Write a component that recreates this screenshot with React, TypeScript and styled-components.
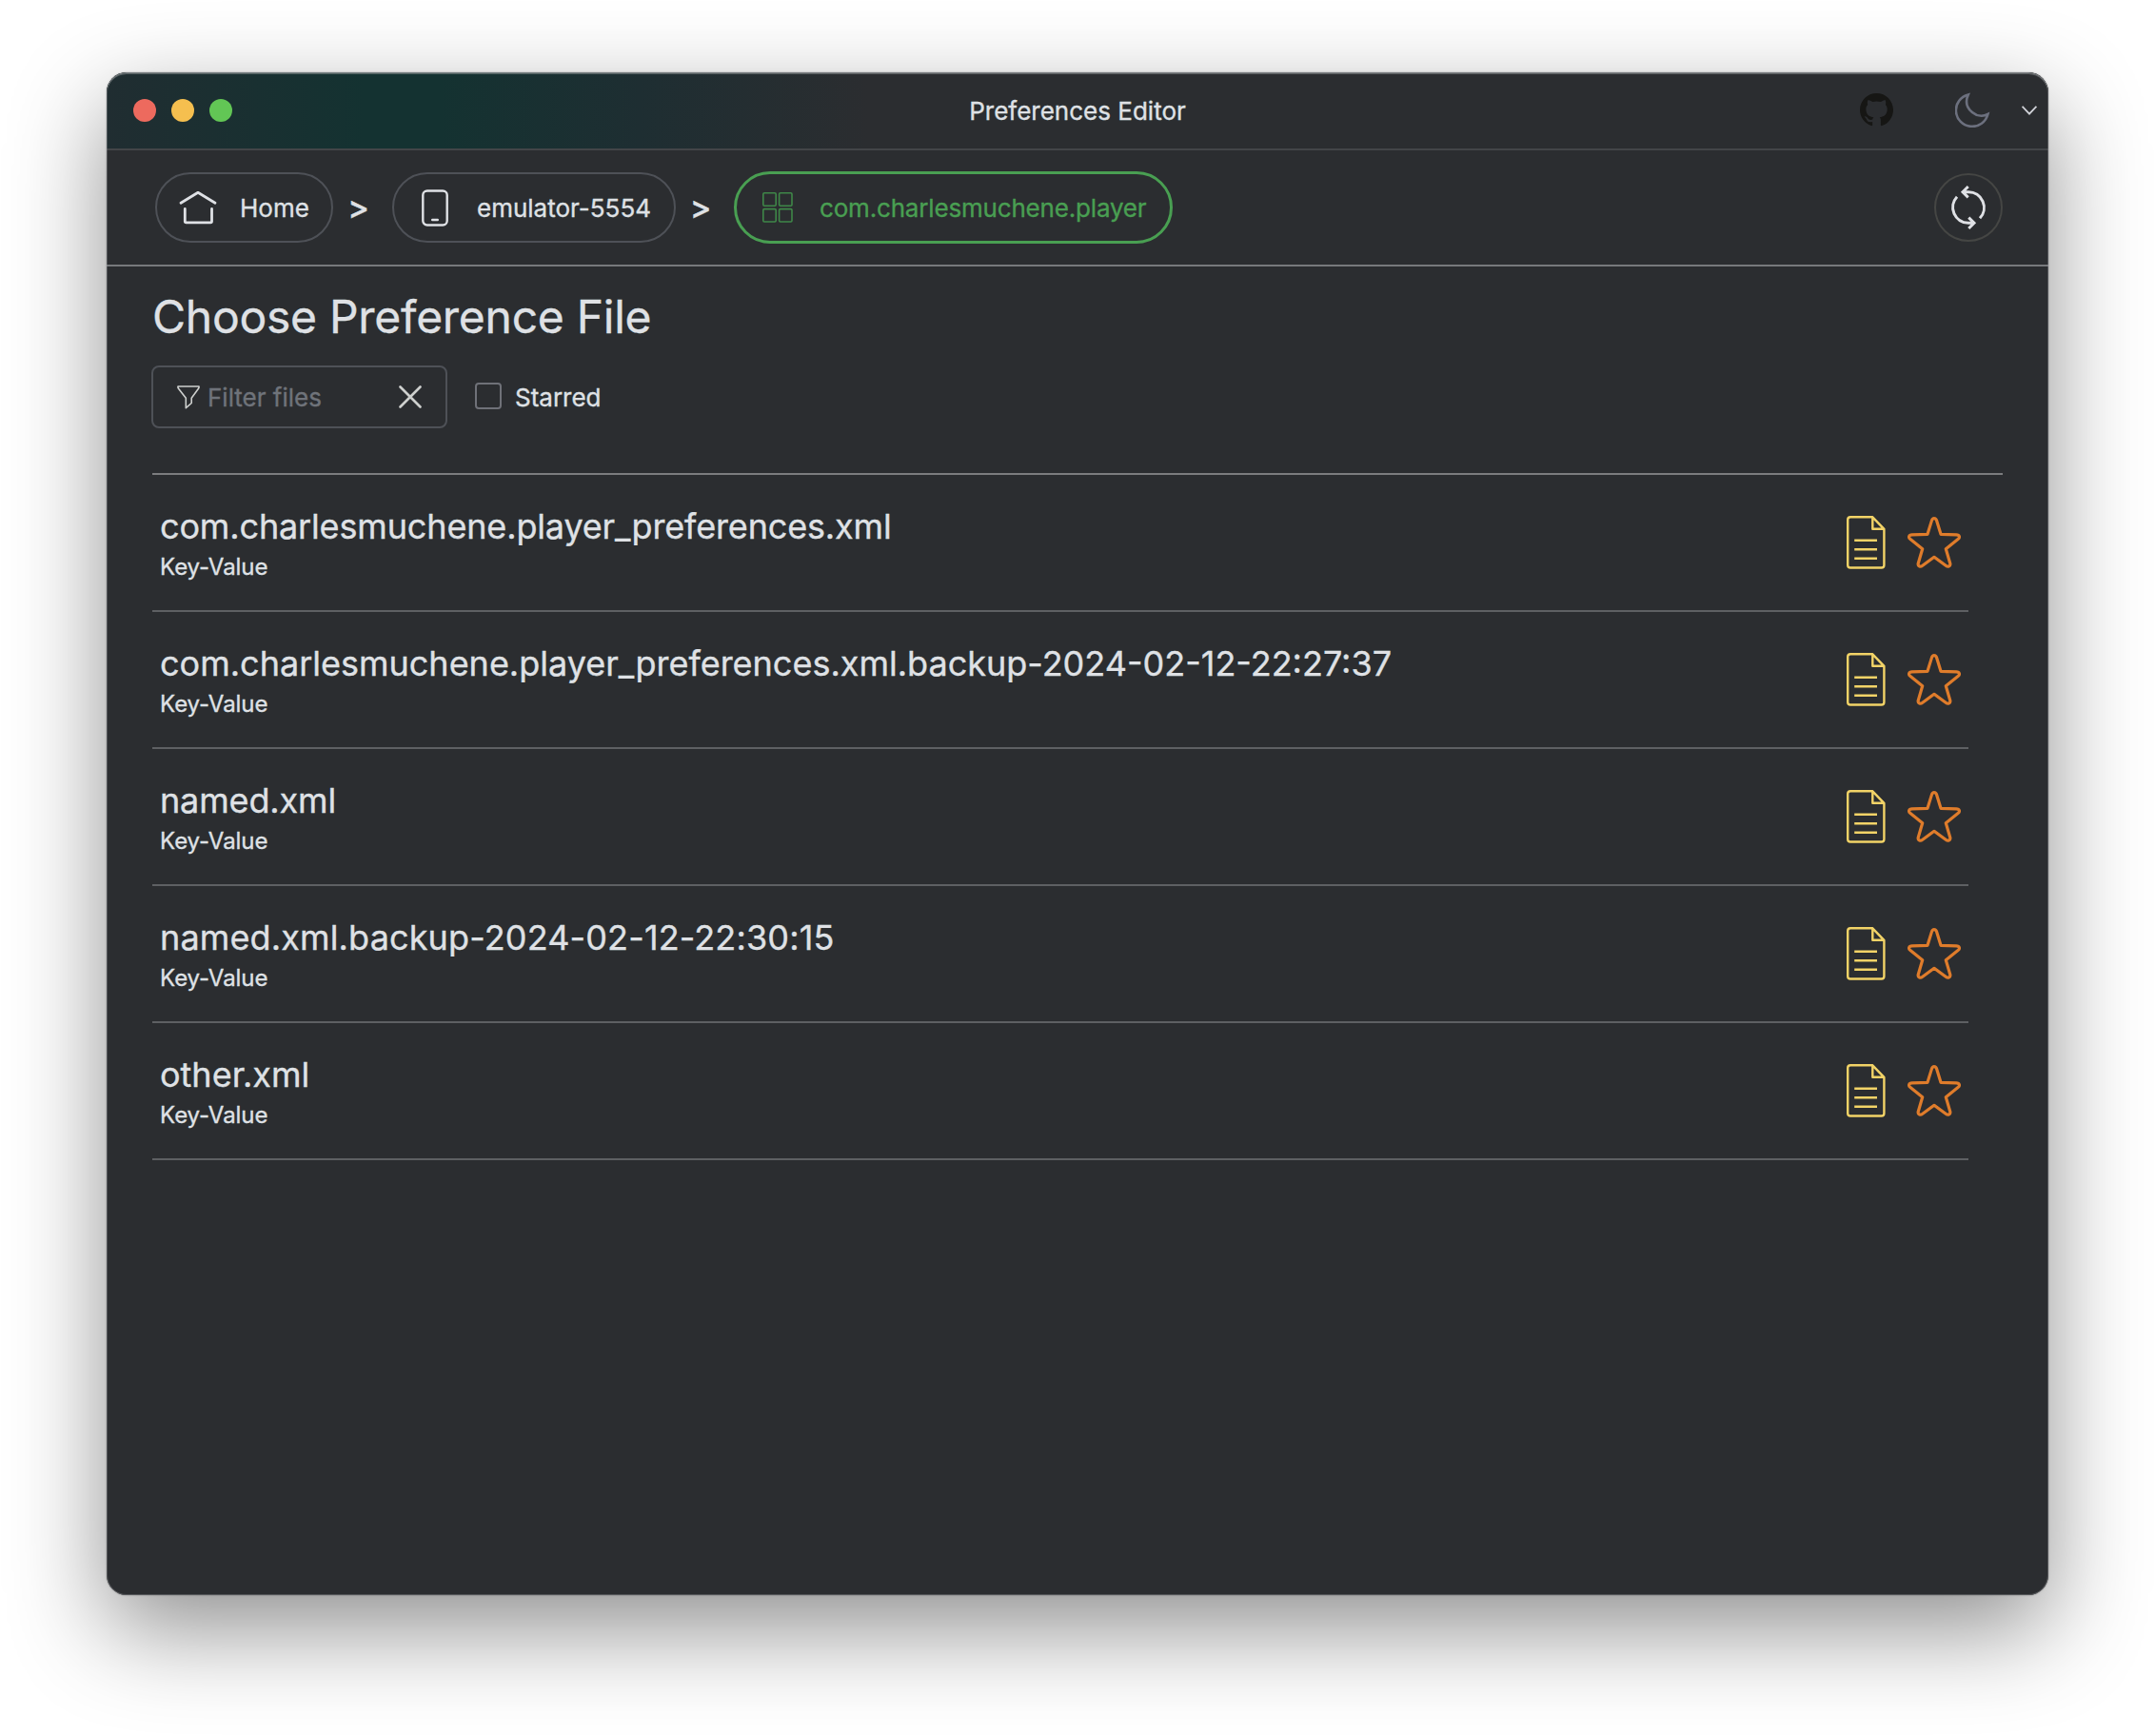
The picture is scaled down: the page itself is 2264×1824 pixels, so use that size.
import React from "react";
import styled, { createGlobalStyle, css } from "styled-components";

const colors = {
  window: "#2b2d30",
  text: "#dfe1e5",
  muted: "#6f737a",
  outline: "#4e5157",
  accent: "#499f52",
};

const GlobalStyle = createGlobalStyle`
  * { box-sizing: border-box; }
  html, body { margin: 0; background: #fff; }
  body, button, input { font-family: Inter, "Noto Sans", sans-serif; -webkit-text-stroke: 0.35px currentColor; }
`;

const Desktop = styled.div`
  width: 2264px;
  height: 1824px;
  padding: 76px 112px 148px;
  overflow: hidden;
  background: #fff;
`;

const Window = styled.main`
  position: relative;
  display: flex;
  flex-direction: column;
  height: 1600px;
  overflow: hidden;
  border-radius: 21px;
  background: ${colors.window};
  color: ${colors.text};
  box-shadow: 0 0 2px rgba(0, 0, 0, 0.35), 0 36px 100px rgba(0, 0, 0, 0.44);

  &::after {
    content: "";
    position: absolute;
    inset: 0;
    border-radius: inherit;
    box-shadow: inset 0 0 0 1px rgba(150, 150, 155, 0.4), inset 0 2px 0 rgba(150, 155, 155, 0.5);
    pointer-events: none;
  }
`;

const TitleBar = styled.header`
  display: grid;
  grid-template-columns: 1fr auto 1fr;
  align-items: center;
  height: 82px;
  flex: none;
  padding: 0 12px;
  border-bottom: 2px solid #434548;
  background: linear-gradient(90deg, #202d31 0, #143231 270px, #143231 350px, #1e2e32 560px, #2b2d30 800px);
`;

const TrafficLights = styled.div`
  display: flex;
  gap: 16px;
  padding-left: 16px;
`;

const Light = styled.span<{ $color: string }>`
  width: 24px;
  height: 24px;
  border-radius: 50%;
  background: ${(p) => p.$color};
`;

const Title = styled.h1`
  margin: 0;
  padding-top: 1px;
  font-size: 26px;
  font-weight: 400;
  line-height: 32px;
`;

const TitleActions = styled.div`
  display: flex;
  align-items: center;
  justify-content: flex-end;
  padding-bottom: 1px;
`;

const IconButton = styled.button<{ $gap?: number }>`
  display: flex;
  margin: 0 0 0 ${(p) => p.$gap ?? 0}px;
  padding: 0;
  border: 0;
  background: none;
`;

const NavBar = styled.nav`
  display: flex;
  align-items: center;
  flex: none;
  height: 122px;
  padding: 0 48px 0 51px;
  border-bottom: 2px solid #77797c;
`;

const Crumb = styled.button<{ $width: number; $iconPad: number; $textGap: number; $active?: boolean }>`
  display: flex;
  align-items: center;
  width: ${(p) => p.$width}px;
  height: 74px;
  padding: 0 0 0 ${(p) => p.$iconPad}px;
  gap: ${(p) => p.$textGap}px;
  border: 2px solid ${colors.outline};
  border-radius: 38px;
  background: none;
  color: ${colors.text};
  font-size: 26px;
  line-height: 32px;
  white-space: nowrap;
  ${(p) =>
    p.$active &&
    css`
      height: 76px;
      border: 3px solid ${colors.accent};
      color: ${colors.accent};
      letter-spacing: -0.18px;
    `}
`;

const CrumbLabel = styled.span`
  padding-top: 2px;
`;

const Separator = styled.span<{ $width: number }>`
  display: flex;
  justify-content: center;
  width: ${(p) => p.$width}px;
  padding: 0 9px 0 0;
  font-size: 34px;
  font-weight: 500;
  line-height: 32px;
`;

const RefreshButton = styled.button`
  display: flex;
  align-items: center;
  justify-content: center;
  width: 72px;
  height: 72px;
  margin-left: auto;
  padding: 0;
  border: 2px solid #454644;
  border-radius: 50%;
  background: none;
`;

const Content = styled.section`
  padding: 23px 48px 0;
`;

const Heading = styled.h2`
  margin: 0;
  font-size: 48px;
  font-weight: 400;
  line-height: 60px;
  letter-spacing: -0.27px;
`;

const Filters = styled.div`
  display: flex;
  align-items: center;
  margin-top: 21px;
`;

const FilterBox = styled.div`
  display: flex;
  align-items: center;
  width: 311px;
  height: 66px;
  margin-left: -1px;
  padding: 0 25px;
  border: 2px solid ${colors.outline};
  border-radius: 8px;
`;

const FilterInput = styled.input`
  flex: 1;
  min-width: 0;
  padding: 0 0 0 8px;
  border: 0;
  outline: 0;
  background: none;
  color: ${colors.text};
  font-size: 26px;
  &::placeholder {
    color: ${colors.muted};
    opacity: 1;
  }
`;

const StarredLabel = styled.label`
  display: flex;
  align-items: center;
  margin-left: 29px;
  padding-top: 2px;
  font-size: 26px;
  line-height: 32px;
`;

const Checkbox = styled.input`
  appearance: none;
  width: 28px;
  height: 28px;
  margin: 0 14px 4px 0;
  border: 2px solid #6f7178;
  border-radius: 4px;
`;

const FileList = styled.ul`
  margin: 47px 0 0;
  padding: 0 36px 0 0;
  list-style: none;
`;

const ListTop = styled.li`
  height: 2px;
  margin-right: -36px;
  background: #7b7c7e;
`;

const FileRow = styled.li`
  display: flex;
  align-items: center;
  height: 144px;
  padding: 0 8px;
  border-bottom: 2px solid #5e6063;
`;

const FileInfo = styled.div`
  flex: 1;
  padding-top: 1px;
`;

const FileName = styled.div<{ $tracking: number }>`
  font-size: 36px;
  line-height: 44px;
  letter-spacing: ${(p) => p.$tracking}px;
`;

const FileKind = styled.div`
  margin-top: 6px;
  font-size: 24px;
  line-height: 29px;
  letter-spacing: -0.05px;
`;

const RowIcons = styled.div`
  display: flex;
  align-items: center;
  gap: 23px;
`;

const GitHubIcon = () => (
  <svg width="35" height="35" viewBox="0 0 16 16" fill="#161614">
    <path d="M8 0C3.58 0 0 3.58 0 8c0 3.54 2.29 6.53 5.47 7.59.4.07.55-.17.55-.38 0-.19-.01-.82-.01-1.49-2.01.37-2.53-.49-2.69-.94-.09-.23-.48-.94-.82-1.13-.28-.15-.68-.52-.01-.53.63-.01 1.08.58 1.23.82.72 1.21 1.87.87 2.33.66.07-.52.28-.87.51-1.07-1.78-.2-3.64-.89-3.64-3.95 0-.87.31-1.59.82-2.15-.08-.2-.36-1.02.08-2.12 0 0 .67-.21 2.2.82.64-.18 1.32-.27 2-.27.68 0 1.36.09 2 .27 1.53-1.04 2.2-.82 2.2-.82.44 1.1.16 1.92.08 2.12.51.56.82 1.27.82 2.15 0 3.07-1.87 3.75-3.65 3.95.29.25.54.73.54 1.48 0 1.07-.01 1.93-.01 2.2 0 .21.15.46.55.38A8.013 8.013 0 0 0 16 8c0-4.42-3.58-8-8-8z" />
  </svg>
);

const MoonIcon = () => (
  <svg width="37" height="37" viewBox="0 0 37 37" fill="none" stroke="#6c707e" strokeWidth="2.6">
    <path d="M13.8 2.4A17 17 0 1 0 34.4 23C29.5 25.6 23 25.2 18 21C11.8 16 10.6 9.5 13.8 2.4Z" />
  </svg>
);

const ChevronIcon = () => (
  <svg width="16" height="10" viewBox="0 0 16 10" fill="none" stroke="#ced0d6" strokeWidth="1.9">
    <path d="M.6 .8L8 8.6L15.4 .8" />
  </svg>
);

const HomeIcon = () => (
  <svg width="40" height="36" viewBox="0 0 40 36" fill="none" stroke={colors.text} strokeWidth="2.8" strokeLinecap="round" strokeLinejoin="round">
    <path d="M2 13.3L20 2.3L38 13.3" />
    <path d="M6.3 19.5V32.5Q6.3 33.8 7.6 33.8H33.2Q34.5 33.8 34.5 32.5V19.5" />
  </svg>
);

const PhoneIcon = () => (
  <svg width="28" height="39" viewBox="0 0 28 39" fill="none" stroke={colors.text} strokeWidth="2.4" strokeLinecap="round">
    <rect x="1.3" y="1.5" width="25.400" height="36" rx="4.5" />
    <path d="M11.2 32H16.8" />
  </svg>
);

const AppsIcon = () => (
  <svg width="32" height="32" viewBox="0 0 32 32" fill="none" stroke="#3f8748" strokeWidth="1.6">
    <rect x=".8" y=".8" width="13.4" height="13.4" rx="1.2" />
    <rect x="17.6" y=".8" width="13.4" height="13.4" rx="1.2" />
    <rect x=".8" y="17.6" width="13.4" height="13.4" rx="1.2" />
    <rect x="17.6" y="17.6" width="13.4" height="13.4" rx="1.2" />
  </svg>
);

const RefreshIcon = () => (
  <svg width="40" height="48" viewBox="0 0 40 48" fill="none" stroke={colors.text} strokeWidth="3">
    <path d="M14.5 7.7H20A16.4 16.4 0 0 1 32 35.3M19.7 2L14 7.7L19.7 13.4" />
    <path d="M25.5 40.3H20A16.4 16.4 0 0 1 8 12.7M20.3 46L26 40.3L20.3 34.6" />
  </svg>
);

const FunnelIcon = () => (
  <svg width="24" height="25" viewBox="0 0 24 25" fill="none" stroke="#ced0ce" strokeWidth="1.6" strokeLinejoin="round">
    <path d="M1 1H23Q23.3 2.2 22.5 3.2L15.2 13.2V18.5L9.3 23.7V13.2L1.5 3.2Q.7 2.2 1 1Z" />
  </svg>
);

const ClearIcon = () => (
  <svg width="24" height="24" viewBox="0 0 24 24" fill="none" stroke="#ced0ce" strokeWidth="2.6" strokeLinecap="round">
    <path d="M1.5 1.5L22.5 22.5M22.5 1.5L1.5 22.5" />
  </svg>
);

const DocumentIcon = () => (
  <svg width="41" height="56" viewBox="0 0 41 56" fill="none" stroke="#f2d367" strokeWidth="2.4" strokeLinejoin="round">
    <path d="M27.3 1.3H4Q1.2 1.3 1.2 4.1V51.7Q1.2 54.5 4 54.5H36.6Q39.4 54.5 39.4 51.7V13.8L27.3 1.3V13.8H39.4" />
    <path d="M8.2 25.7H32M8.2 35.2H32M8.2 44.7H32" />
  </svg>
);

const StarIcon = () => (
  <svg width="56" height="54" viewBox="0 0 56 54" fill="none" stroke="#df7c2b" strokeWidth="3.2" strokeLinejoin="round">
    <path d="M21 18.3L25.4 4.1C26.4 .9 29.6 .9 30.6 4.1L35 18.3L51.3 18.8C54.6 18.9 55.5 21.6 53 23.5L40.3 33.7L44.7 48.7C45.5 51.8 42.7 53.2 40.2 51.3L28 42.3L15.8 51.3C13.3 53.2 10.5 51.8 11.3 48.7L15.7 33.7L3 23.5C.5 21.6 1.4 18.9 4.7 18.8Z" />
  </svg>
);

const files = [
  { name: "com.charlesmuchene.player_preferences.xml", tracking: -0.15 },
  { name: "com.charlesmuchene.player_preferences.xml.backup-2024-02-12-22:27:37", tracking: 0 },
  { name: "named.xml", tracking: -0.15 },
  { name: "named.xml.backup-2024-02-12-22:30:15", tracking: 0.14 },
  { name: "other.xml", tracking: 0 },
];

export default function App() {
  return (
    <>
      <GlobalStyle />
      <Desktop>
        <Window>
          <TitleBar>
            <TrafficLights>
              <Light $color="#ed6a5e" />
              <Light $color="#f5bf4f" />
              <Light $color="#62c655" />
            </TrafficLights>
            <Title>Preferences Editor</Title>
            <TitleActions>
              <IconButton aria-label="GitHub"><GitHubIcon /></IconButton>
              <IconButton $gap={65} aria-label="Theme"><MoonIcon /></IconButton>
              <IconButton $gap={33} aria-label="More"><ChevronIcon /></IconButton>
            </TitleActions>
          </TitleBar>
          <NavBar>
            <Crumb $width={187} $iconPad={23} $textGap={24}>
              <HomeIcon />
              <CrumbLabel>Home</CrumbLabel>
            </Crumb>
            <Separator $width={62}>&gt;</Separator>
            <Crumb $width={298} $iconPad={29} $textGap={30}>
              <PhoneIcon />
              <CrumbLabel>emulator-5554</CrumbLabel>
            </Crumb>
            <Separator $width={61}>&gt;</Separator>
            <Crumb $width={461} $iconPad={27} $textGap={28} $active>
              <AppsIcon />
              <CrumbLabel>com.charlesmuchene.player</CrumbLabel>
            </Crumb>
            <RefreshButton aria-label="Refresh"><RefreshIcon /></RefreshButton>
          </NavBar>
          <Content>
            <Heading>Choose Preference File</Heading>
            <Filters>
              <FilterBox>
                <FunnelIcon />
                <FilterInput placeholder="Filter files" />
                <IconButton aria-label="Clear"><ClearIcon /></IconButton>
              </FilterBox>
              <StarredLabel>
                <Checkbox type="checkbox" />
                Starred
              </StarredLabel>
            </Filters>
            <FileList>
              <ListTop />
              {files.map(({ name, tracking }) => (
                <FileRow key={name}>
                  <FileInfo>
                    <FileName $tracking={tracking}>{name}</FileName>
                    <FileKind>Key-Value</FileKind>
                  </FileInfo>
                  <RowIcons>
                    <DocumentIcon />
                    <StarIcon />
                  </RowIcons>
                </FileRow>
              ))}
            </FileList>
          </Content>
        </Window>
      </Desktop>
    </>
  );
}
